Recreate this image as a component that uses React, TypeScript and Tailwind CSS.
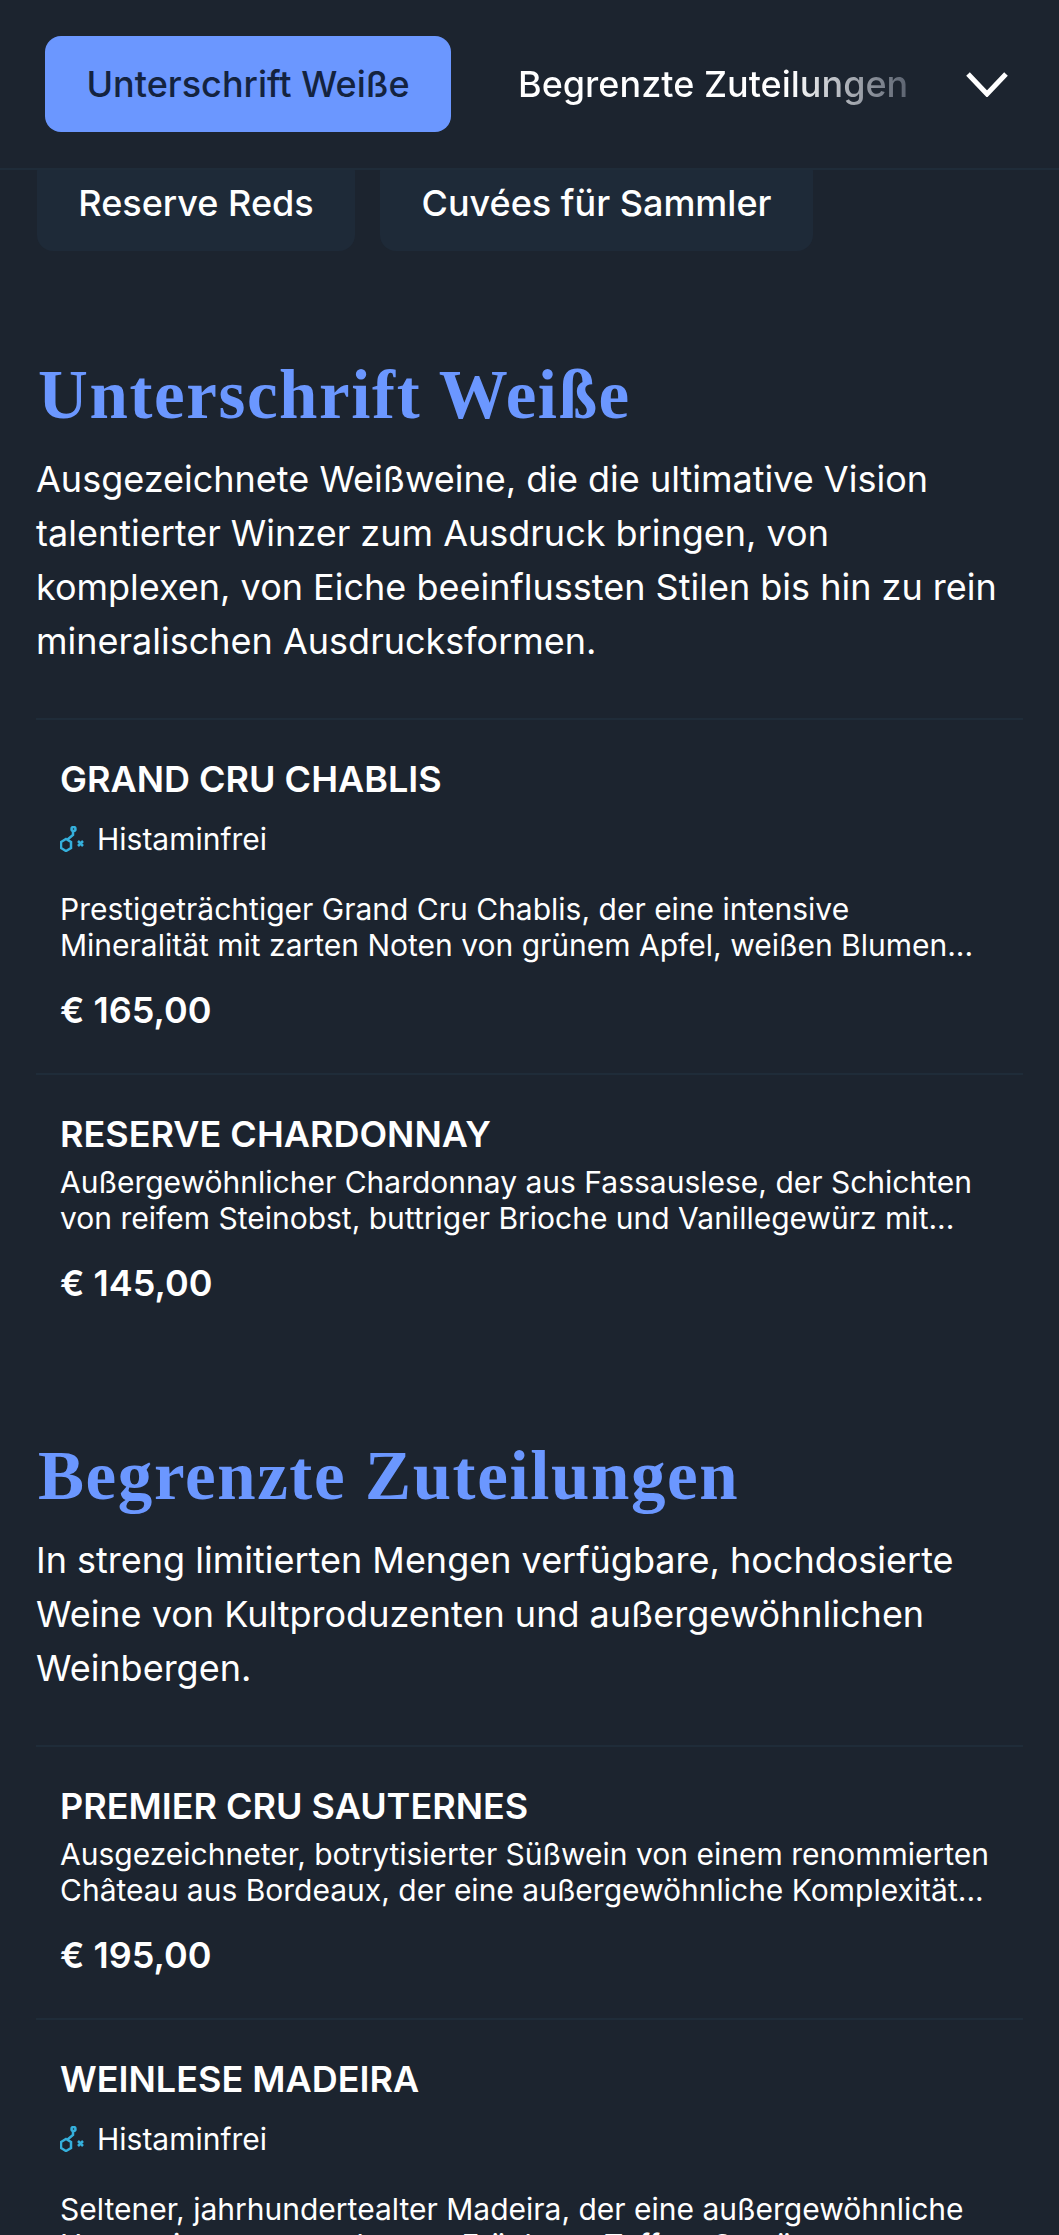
import React from 'react'

const inter = "font-['Inter',sans-serif]"

function MoleculeIcon() {
  return (
    <svg width="24" height="26" viewBox="0 0 24 26" fill="none" stroke="#35b0dc" strokeWidth="2.500" className="shrink-0">
      <path d="M6 13l5 3v6l-5 3-5-3v-6z" />
      <path d="M7.500 13.500L13 9V5.500" />
      <circle cx="13.500" cy="3" r="2" />
      <path d="M18 15l5 5M23 15l-5 5" />
    </svg>
  )
}

type Wine = { name: string; histamine?: boolean; desc: string[]; price?: string }

const whites: Wine[] = [
  {
    name: 'GRAND CRU CHABLIS',
    histamine: true,
    desc: [
      'Prestigeträchtiger Grand Cru Chablis, der eine intensive',
      'Mineralität mit zarten Noten von grünem Apfel, weißen Blumen...',
    ],
    price: '€ 165,00',
  },
  {
    name: 'RESERVE CHARDONNAY',
    desc: [
      'Außergewöhnlicher Chardonnay aus Fassauslese, der Schichten',
      'von reifem Steinobst, buttriger Brioche und Vanillegewürz mit...',
    ],
    price: '€ 145,00',
  },
]

const limited: Wine[] = [
  {
    name: 'PREMIER CRU SAUTERNES',
    desc: [
      'Ausgezeichneter, botrytisierter Süßwein von einem renommierten',
      'Château aus Bordeaux, der eine außergewöhnliche Komplexität...',
    ],
    price: '€ 195,00',
  },
  {
    name: 'WEINLESE MADEIRA',
    histamine: true,
    desc: [
      'Seltener, jahrhundertealter Madeira, der eine außergewöhnliche',
      'Harmonie aus getrockneten Früchten, Toffee, Gewürzen...',
    ],
  },
]

function WineRow({ wine }: { wine: Wine }) {
  return (
    <div className="border-t-2 border-[#1f2c39] px-6 pt-[37px] pb-[41px]">
      <h3 className="text-[36px] leading-[44px] font-semibold text-white">{wine.name}</h3>
      {wine.histamine ? (
        <div className="mt-4 mb-[30px] flex h-[44px] items-center gap-[13px]">
          <MoleculeIcon />
          <span className="text-[30px] leading-[44px] text-white">Histaminfrei</span>
        </div>
      ) : (
        <div className="h-[8px]" />
      )}
      <p className="text-[30px] leading-[36px] text-white">
        {wine.desc.map((line) => (
          <span key={line} className="block whitespace-nowrap">{line}</span>
        ))}
      </p>
      {wine.price && (
        <p className="mt-[25px] text-[36px] leading-[44px] font-semibold text-white">{wine.price}</p>
      )}
    </div>
  )
}

function Section({ title, text, wines }: { title: string; text: string[]; wines: Wine[] }) {
  return (
    <section className="mb-[90px]">
      <h2 className="ml-[2px] font-['Liberation_Serif',serif] text-[69px] leading-[80px] font-bold tracking-[1.6px] text-[#6b97ff]">{title}</h2>
      <p className="mt-[17px] mb-[50px] text-[36px] leading-[54px] text-white">
        {text.map((line) => (
          <span key={line} className="block whitespace-nowrap">{line}</span>
        ))}
      </p>
      {wines.map((w) => (
        <WineRow key={w.name} wine={w} />
      ))}
    </section>
  )
}

export default function App() {
  return (
    <div className={`${inter} h-screen overflow-hidden bg-[#1c242f]`}>
      <header className="relative z-10 flex h-[170px] items-center border-b-2 border-[#1f2c39] bg-[#1c242f] pl-[45px]">
        <button className="flex h-[96px] w-[406px] shrink-0 items-center justify-center rounded-2xl bg-[#6b97ff] text-[36px] font-medium text-[#14233f]">
          Unterschrift Weiße
        </button>
        <div className="ml-[67px] bg-gradient-to-r from-white from-[70%] to-[#5b6370] bg-clip-text text-[36px] font-medium whitespace-nowrap text-transparent">
          Begrenzte Zuteilungen
        </div>
        <svg width="44" height="26" viewBox="0 0 44 26" fill="none" stroke="white" strokeWidth="5" className="ml-[57px]">
          <path d="M3 3l19 20L41 3" />
        </svg>
      </header>
      <div className="-mt-[15px] flex gap-[25px] px-[37px]">
        <div className="flex h-[96px] w-[318px] items-center justify-center rounded-2xl bg-[#1e2a38] text-[36px] font-medium text-white">Reserve Reds</div>
        <div className="flex h-[96px] w-[433px] items-center justify-center rounded-2xl bg-[#1e2a38] text-[36px] font-medium text-white">Cuvées für Sammler</div>
      </div>
      <main className="px-[36px] pt-[104px]">
        <Section
          title="Unterschrift Weiße"
          text={[
            'Ausgezeichnete Weißweine, die die ultimative Vision',
            'talentierter Winzer zum Ausdruck bringen, von',
            'komplexen, von Eiche beeinflussten Stilen bis hin zu rein',
            'mineralischen Ausdrucksformen.',
          ]}
          wines={whites}
        />
        <Section
          title="Begrenzte Zuteilungen"
          text={[
            'In streng limitierten Mengen verfügbare, hochdosierte',
            'Weine von Kultproduzenten und außergewöhnlichen',
            'Weinbergen.',
          ]}
          wines={limited}
        />
      </main>
    </div>
  )
}
